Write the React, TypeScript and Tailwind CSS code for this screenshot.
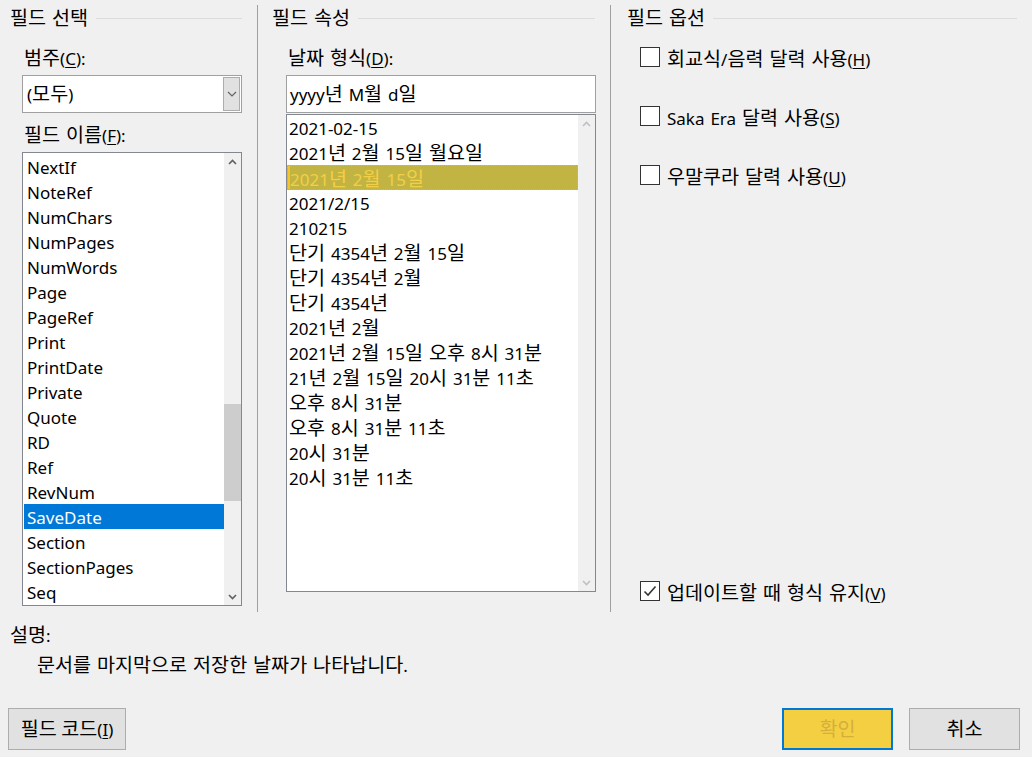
import React from "react";

const FONT = '"Noto Sans", "Noto Sans CJK KR", sans-serif';

const FIELD_NAMES = [
  "NextIf", "NoteRef", "NumChars", "NumPages", "NumWords", "Page", "PageRef", "Print",
  "PrintDate", "Private", "Quote", "RD", "Ref", "RevNum", "SaveDate", "Section",
  "SectionPages", "Seq",
];

const DATE_FORMATS = [
  "2021-02-15",
  "2021년 2월 15일 월요일",
  "2021년 2월 15일",
  "2021/2/15",
  "210215",
  "단기 4354년 2월 15일",
  "단기 4354년 2월",
  "단기 4354년",
  "2021년 2월",
  "2021년 2월 15일 오후 8시 31분",
  "21년 2월 15일 20시 31분 11초",
  "오후 8시 31분",
  "오후 8시 31분 11초",
  "20시 31분",
  "20시 31분 11초",
];

// hangul runs get a bigger size so they match the width of Malgun Gothic
function K({ t }: { t: string }) {
  const parts = t.split(/([\uAC00-\uD7A3\u3131-\u318E]+)/);
  return (
    <span>
      {parts.map((p, i) =>
        /[\uAC00-\uD7A3\u3131-\u318E]/.test(p) ? (
          <span key={i} className="text-[19.6px] leading-[20px]">
            {p}
          </span>
        ) : (
          p
        )
      )}
    </span>
  );
}

function Mn({ c }: { c: string }) {
  return <span className="underline underline-offset-2">{c}</span>;
}

function GroupHeader({ title, pl }: { title: string; pl: string }) {
  return (
    <div className={`flex h-[36px] items-center gap-[8px] pr-[15px] ${pl}`}>
      <span className="whitespace-nowrap">
        <K t={title} />
      </span>
      <div className="h-px flex-1 bg-[#dcdcdc]" />
    </div>
  );
}

function Caret({ down, color }: { down?: boolean; color: string }) {
  return (
    <svg width="9" height="6" viewBox="0 0 9 6" className={down ? "rotate-180" : ""}>
      <polyline points="1,5 4.5,1.5 8,5" fill="none" stroke={color} strokeWidth="1.6" />
    </svg>
  );
}

function Checkbox({ checked }: { checked?: boolean }) {
  return (
    <div className="flex h-[20px] w-[20px] shrink-0 items-center justify-center border border-[#333333] bg-white">
      {checked && (
        <svg width="14" height="12" viewBox="0 0 14 12">
          <polyline points="1.5,6.5 5,10 12.5,1.5" fill="none" stroke="#333333" strokeWidth="1.6" />
        </svg>
      )}
    </div>
  );
}

function Option({ label, mn, checked }: { label: string; mn: string; checked?: boolean }) {
  return (
    <label className="flex h-[20px] items-center gap-[7px]">
      <Checkbox checked={checked} />
      <span className="h-[20px] translate-y-[2px] whitespace-nowrap">
        <K t={label} />(<Mn c={mn} />)
      </span>
    </label>
  );
}

export default function App() {
  return (
    <div
      className="flex h-[757px] w-[1032px] flex-col overflow-hidden bg-[#f0f0f0] text-[17px] leading-[20px] text-black [word-spacing:1.5px]"
      style={{ fontFamily: FONT }}
    >
      <div className="flex h-[612px]">
        {/* 필드 선택 */}
        <div className="flex w-[257px] flex-col">
          <GroupHeader title="필드 선택" pl="pl-[10px]" />
          <div className="mt-[12px] h-[20px] pl-[24px]">
            <K t="범주" />(<Mn c="C" />):
          </div>
          <div className="ml-[22px] mt-[7px] flex h-[38px] w-[220px] items-center border border-[#a0a0a0] bg-white pl-[4px] pr-px">
            <span className="h-[20px] flex-1">
              (<K t="모두" />)
            </span>
            <div className="flex h-[34px] w-[17px] items-center justify-center border border-[#adadad] bg-[#e1e1e1]">
              <svg width="10" height="6" viewBox="0 0 10 6">
                <polyline points="1,1 5,5 9,1" fill="none" stroke="#606060" strokeWidth="1.1" />
              </svg>
            </div>
          </div>
          <div className="mt-[12px] h-[20px] pl-[24px]">
            <K t="필드 이름" />(<Mn c="F" />):
          </div>
          <div className="ml-[22px] mt-[7px] flex h-[454px] w-[220px] border border-[#828790] bg-white">
            <div className="flex-1 overflow-hidden pl-px pt-px">
              {FIELD_NAMES.map((n) => (
                <div
                  key={n}
                  className={`h-[25px] pl-[3px] pt-[1px] leading-[25px] ${n === "SaveDate" ? "bg-[#0078d7] text-white" : ""}`}
                >
                  {n}
                </div>
              ))}
            </div>
            <div className="flex w-[17px] flex-col bg-[#f0f0f0]">
              <div className="flex h-[17px] items-center justify-center">
                <Caret color="#606060" />
              </div>
              <div className="flex-1">
                <div className="mt-[234px] h-[97px] bg-[#cdcdcd]" />
              </div>
              <div className="flex h-[17px] items-center justify-center">
                <Caret down color="#606060" />
              </div>
            </div>
          </div>
        </div>

        <div className="mt-[5px] w-px bg-[#a0a0a0]" />

        {/* 필드 속성 */}
        <div className="flex w-[352px] flex-col">
          <GroupHeader title="필드 속성" pl="pl-[14px]" />
          <div className="mt-[12px] h-[20px] pl-[30px]">
            <K t="날짜 형식" />(<Mn c="D" />):
          </div>
          <div className="ml-[28px] mt-[7px] flex h-[38px] w-[310px] items-center border border-[#a0a0a0] bg-white pl-[3px]">
            <span className="h-[20px] whitespace-pre">
              <K t="yyyy년 M월 d일" />
            </span>
          </div>
          <div className="ml-[28px] mt-px flex h-[478px] w-[310px] border border-[#828790] bg-white">
            <div className="flex-1 overflow-hidden">
              {DATE_FORMATS.map((f, i) => (
                <div
                  key={f}
                  className={`h-[25px] whitespace-nowrap pl-[2px] leading-[25px] ${
                    i === 2
                      ? "border border-dotted border-[#e9b923] bg-[#c2b443] pt-[1px] text-[#f2cf45] shadow-[inset_2px_0_0_#f4c52a]"
                      : "pt-[1px]"
                  }`}
                >
                  <K t={f} />
                </div>
              ))}
            </div>
            <div className="flex w-[17px] flex-col bg-[#f0f0f0]">
              <div className="flex h-[17px] items-center justify-center">
                <Caret color="#c0c0c0" />
              </div>
              <div className="flex-1" />
              <div className="flex h-[17px] items-center justify-center">
                <Caret down color="#c0c0c0" />
              </div>
            </div>
          </div>
        </div>

        <div className="mt-[5px] w-px bg-[#a0a0a0]" />

        {/* 필드 옵션 */}
        <div className="flex flex-1 flex-col">
          <GroupHeader title="필드 옵션" pl="pl-[16px]" />
          <div className="flex flex-col gap-[39px] pl-[29px] pt-[11px]">
            <Option label="회교식/음력 달력 사용" mn="H" />
            <Option label="Saka Era 달력 사용" mn="S" />
            <Option label="우말쿠라 달력 사용" mn="U" />
          </div>
          <div className="flex-1" />
          <div className="mb-[11px] pl-[29px]">
            <Option label="업데이트할 때 형식 유지" mn="V" checked />
          </div>
        </div>
      </div>

      {/* 설명 */}
      <div className="mt-[13px] h-[20px] pl-[10px]">
        <K t="설명" />:
      </div>
      <div className="mt-[10px] h-[20px] pl-[37px]">
        <K t="문서를 마지막으로 저장한 날짜가 나타납니다." />
      </div>

      <div className="mt-[33px] flex items-center pl-[8px] pr-[12px]">
        <button className="h-[42px] w-[118px] border border-[#adadad] bg-[#e1e1e1]">
          <K t="필드 코드" />(<Mn c="I" />)
        </button>
        <div className="flex-1" />
        <button className="h-[42px] w-[111px] border-2 border-[#0078d7] bg-[#f5cf42] text-[#d2b03c]">
          <K t="확인" />
        </button>
        <button className="ml-[16px] h-[42px] w-[111px] border border-[#adadad] bg-[#e1e1e1]">
          <K t="취소" />
        </button>
      </div>
    </div>
  );
}
